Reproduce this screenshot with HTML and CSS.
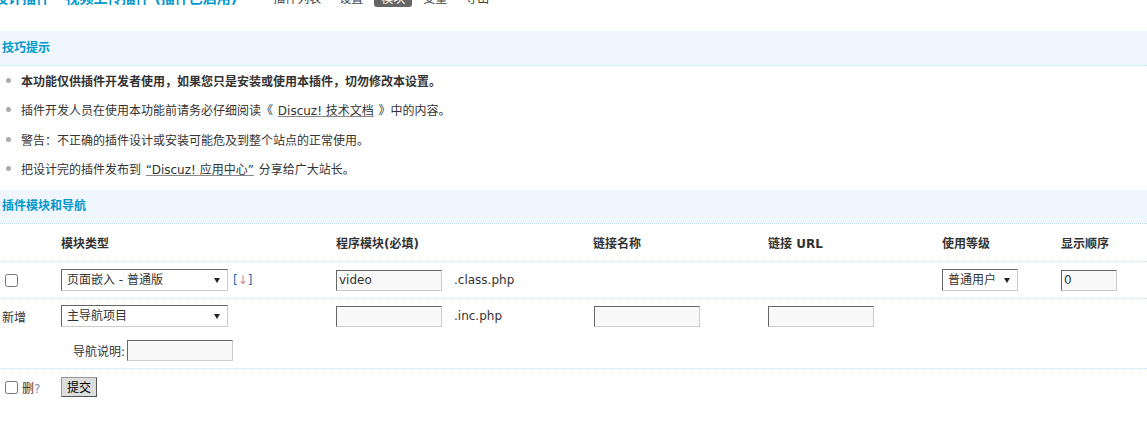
FILE: index.html
```html
<!DOCTYPE html>
<html lang="zh-CN">
<head>
<meta charset="utf-8">
<title>设计插件 - 模块</title>
<link rel="stylesheet" href="styles.css">
</head>
<body>
<div class="topbar">
  <h3 class="page-title">设计插件 - 视频上传插件 (插件已启用)</h3>
  <ul class="tabs">
    <li><a class="tab" href="#">插件列表</a></li>
    <li><a class="tab" href="#">设置</a></li>
    <li><a class="tab current" href="#">模块</a></li>
    <li><a class="tab" href="#">变量</a></li>
    <li><a class="tab" href="#">导出</a></li>
  </ul>
</div>

<div class="partition first">技巧提示</div>
<ul class="tips">
  <li class="strong">本功能仅供插件开发者使用，如果您只是安装或使用本插件，切勿修改本设置。</li>
  <li>插件开发人员在使用本功能前请务必仔细阅读《 <a class="ulink" href="#">Discuz! 技术文档</a> 》中的内容。</li>
  <li>警告：不正确的插件设计或安装可能危及到整个站点的正常使用。</li>
  <li>把设计完的插件发布到 <a class="ulink" href="#">“Discuz! 应用中心”</a> 分享给广大站长。</li>
</ul>

<div class="partition second">插件模块和导航</div>
<div class="grid">
  <div class="row header">
    <div class="cell"></div>
    <div class="cell">模块类型</div>
    <div class="cell">程序模块(必填)</div>
    <div class="cell">链接名称</div>
    <div class="cell">链接 URL</div>
    <div class="cell">使用等级</div>
    <div class="cell">显示顺序</div>
  </div>

  <div class="row item">
    <div class="cell"><input type="checkbox" class="chk"></div>
    <div class="cell">
      <span class="sel w167"><select><option>页面嵌入 - 普通版</option></select></span>
      <a class="move" href="#">[<span class="arr">↓</span>]</a>
    </div>
    <div class="cell"><input class="txt" type="text" value="video"><span class="ext">.class.php</span></div>
    <div class="cell"></div>
    <div class="cell"></div>
    <div class="cell"><span class="sel w76"><select><option>普通用户</option></select></span></div>
    <div class="cell"><input class="txt small" type="text" value="0"></div>
  </div>

  <div class="row add">
    <div class="cell pad">新增</div>
    <div class="cell"><span class="sel w167"><select><option>主导航项目</option></select></span></div>
    <div class="cell"><input class="txt" type="text"><span class="ext">.inc.php</span></div>
    <div class="cell shift"><input class="txt" type="text"></div>
    <div class="cell"><input class="txt" type="text"></div>
    <div class="cell"></div>
    <div class="cell"></div>
    <div class="cell navdesc">导航说明:<input class="txt desc" type="text"></div>
  </div>

  <div class="row submit">
    <div class="cell"><input type="checkbox" class="chk"><span class="del">删<span class="q">?</span></span></div>
    <div class="cell"><button class="btn" type="button">提交</button></div>
  </div>
</div>
</body>
</html>
```

FILE: styles.css
```css
html, body {
  margin: 0;
  padding: 0;
  background: #fff;
}
body {
  font-family: "DejaVu Sans", "Noto Sans CJK SC", sans-serif;
  font-size: 12px;
  color: #333;
}
a { color: inherit; text-decoration: none; }

.topbar {
  display: flex;
  align-items: flex-end;
  height: 18px;
  margin-top: -11px;
}
.page-title {
  margin: 0 0 0 -6px;
  font-size: 14px;
  font-weight: bold;
  line-height: 18px;
  color: #09c;
  white-space: nowrap;
}
.tabs {
  list-style: none;
  display: flex;
  margin: 0 0 0 29px;
  padding: 0;
}
.tabs li { margin-right: 4px; }
.tab {
  display: block;
  padding: 3px 7px 1px;
  line-height: 14px;
  color: #444;
  border-radius: 3px;
}
.tab.current {
  background: #666;
  color: #fff;
}

.partition {
  box-sizing: border-box;
  height: 35px;
  line-height: 34px;
  padding-left: 2px;
  background: #f0f6fd;
  border-bottom: 1px dotted #c9e0f2;
  color: #09c;
  font-weight: bold;
}
.partition.first { margin-top: 24px; }
.partition.second { margin-top: 7px; height: 34px; line-height: 33px; }

.tips {
  list-style: none;
  margin: 0;
  padding: 0;
}
.tips li {
  display: flex;
  align-items: center;
  height: 29.3px;
  white-space: pre;
}
.tips li::before {
  content: "";
  width: 5px;
  height: 5px;
  border-radius: 50%;
  background: #aaa;
  margin: 0 10px 0 6px;
  flex: none;
}
.tips li.strong { font-weight: bold; }
.ulink {
  text-decoration: underline;
  text-decoration-color: #888;
  margin: 0 1px;
}

.row {
  display: grid;
  grid-template-columns: 61px 275px 257px 175px 174px 119px 1fr;
  align-items: center;
  box-sizing: border-box;
  border-bottom: 1px dotted #c9e0f2;
}
.row.header { height: 38px; font-weight: bold; }
.row.item { height: 37px; }
.row.add {
  height: 70px;
  grid-template-rows: 34px 35px;
}
.row.submit { height: 36px; border-bottom: 0; }
.cell {
  display: flex;
  align-items: center;
  white-space: nowrap;
}
.cell.pad { padding-left: 2px; }
.cell.shift { padding-left: 1px; }
.navdesc {
  grid-column: 2 / span 6;
  padding-left: 12px;
}

.chk {
  margin: 0 0 0 5px;
  width: 13px;
  height: 13px;
}

.sel {
  position: relative;
  display: inline-block;
}
.sel select {
  appearance: none;
  -webkit-appearance: none;
  box-sizing: border-box;
  height: 22px;
  margin: 0;
  padding: 0 0 0 5px;
  border: 1px solid;
  border-color: #666 #ccc #ccc #666;
  border-radius: 0;
  background: #fff;
  font-family: "DejaVu Sans", "Noto Sans CJK SC", sans-serif;
  font-size: 12px;
  color: #333;
}
.sel::after {
  content: "";
  position: absolute;
  right: 8px;
  top: 9px;
  border-left: 3px solid transparent;
  border-right: 3px solid transparent;
  border-top: 5px solid #222;
  pointer-events: none;
}
.w167 select { width: 167px; }
.w76 select { width: 76px; }

.move {
  margin-left: 5px;
  color: #2366a8;
  font-size: 12px;
}
.move .arr { color: #c28ca0; }

.txt {
  box-sizing: border-box;
  width: 106px;
  height: 21px;
  margin: 0;
  padding: 0 2px;
  border: 1px solid;
  border-color: #666 #ccc #ccc #666;
  background: #f9f9f9;
  font-family: "DejaVu Sans", "Noto Sans CJK SC", sans-serif;
  font-size: 12px;
  color: #333;
}
.txt.small { width: 56px; }
.txt.desc { margin-left: 2px; }
.ext { margin-left: 12px; }

.del { margin-left: 4px; }
.del .q { color: #6f93b5; }

.btn {
  box-sizing: border-box;
  height: 20px;
  margin: 0;
  padding: 0 5px;
  border: 1px solid;
  border-color: #999 #555 #555 #999;
  background: #ddd;
  font-family: "Noto Sans CJK SC", sans-serif;
  font-size: 12px;
  line-height: 16px;
  color: #000;
}
```
